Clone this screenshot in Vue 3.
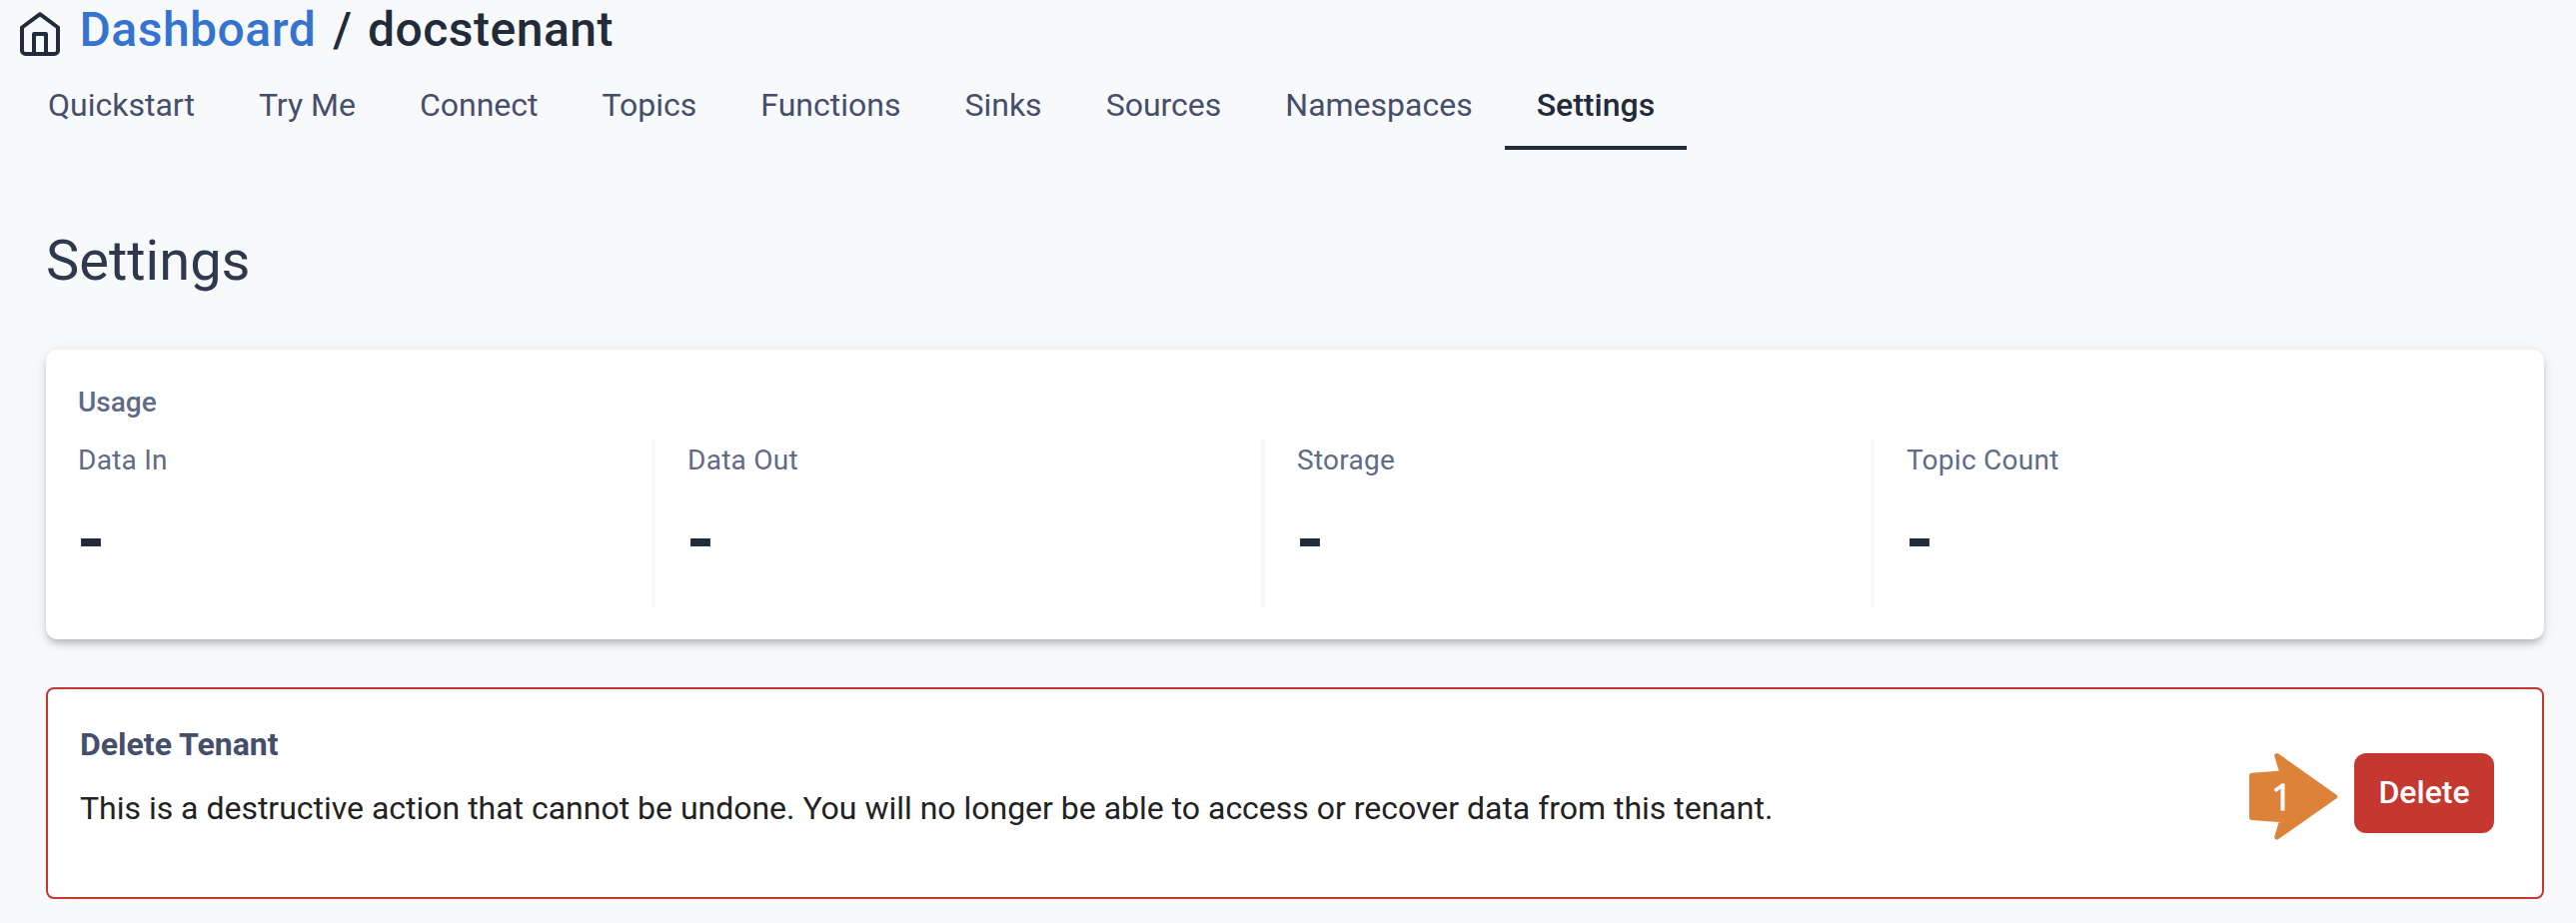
<script setup>
const tabs = ['Quickstart', 'Try Me', 'Connect', 'Topics', 'Functions', 'Sinks', 'Sources', 'Namespaces', 'Settings']
const active = 'Settings'
const metrics = [
  { label: 'Data In', value: '-' },
  { label: 'Data Out', value: '-' },
  { label: 'Storage', value: '-' },
  { label: 'Topic Count', value: '-' },
]
</script>

<template>
  <div class="page">
    <header class="crumbs">
      <svg class="home" viewBox="0 0 40 44" width="40" height="44">
        <path d="M2 15.5 L20 2.2 L38 15.5 V38.400 a3.6 3.6 0 0 1 -3.6 3.6 H5.6 A3.6 3.6 0 0 1 2 38.400 Z" />
        <path d="M14 42 V22 H26 V42" />
      </svg>
      <a class="link">Dashboard</a>
      <span class="slash">/</span>
      <span class="tenant">docstenant</span>
    </header>
    <nav class="tabs">
      <a v-for="t in tabs" :key="t" class="tab" :class="{ active: t === active }">{{ t }}</a>
    </nav>
    <main class="content">
      <h1 class="title">Settings</h1>
      <section class="usage">
        <h2 class="usage-title">Usage</h2>
        <div class="metrics">
          <div v-for="m in metrics" :key="m.label" class="metric">
            <div class="label">{{ m.label }}</div>
            <div class="value">{{ m.value }}</div>
          </div>
        </div>
      </section>
      <section class="danger">
        <div class="danger-text">
          <h2 class="danger-title">Delete Tenant</h2>
          <p class="danger-body">This is a destructive action that cannot be undone. You will no longer be able to access or recover data from this tenant.</p>
        </div>
        <div class="marker">
          <svg viewBox="0 0 90 88" width="90" height="88">
            <path d="M2.500 22.300 L33 20 L27.700 2.600 L85.600 43.500 L27.700 84 L33 66.800 L2.500 64.500 Z" />
          </svg>
          <span class="marker-num">1</span>
        </div>
        <button class="delete">Delete</button>
      </section>
    </main>
  </div>
</template>

<style>
body {
  background: #f8f9fb;
}
</style>

<style scoped>
.page {
  box-sizing: border-box;
  height: 924px;
  overflow: hidden;
  background: #f8f9fb;
  font-family: Roboto, "Liberation Sans", sans-serif;
  color: #222b3a;
}
.crumbs {
  box-sizing: border-box;
  display: flex;
  align-items: flex-start;
  height: 74px;
  padding: 2px 0 0 20px;
  font-size: 48px;
  line-height: 56px;
  font-weight: 500;
  letter-spacing: 0.5px;
}
.home {
  margin: 10px 19.5px 0 0;
  fill: none;
  stroke: #222b3a;
  stroke-width: 4;
  stroke-linejoin: round;
}
.link {
  color: #3573d1;
}
.slash {
  margin: 0 15.5px 0 17px;
}
.tabs {
  display: flex;
  height: 76px;
  padding-left: 16px;
}
.tab {
  box-sizing: border-box;
  padding: 12px 32px 0;
  font-size: 32px;
  line-height: 38px;
  color: #454f6b;
}
.active {
  color: #222b3a;
  font-weight: 500;
  border-bottom: 4px solid #222b3a;
}
.content {
  padding: 78px 32px 0 46px;
}
.title {
  margin: 0;
  font-size: 56px;
  line-height: 66px;
  font-weight: 400;
  color: #2f384c;
}
.usage {
  box-sizing: border-box;
  height: 290px;
  margin-top: 56px;
  padding-top: 36px;
  background: #fff;
  border-radius: 12px;
  box-shadow: 0 6px 6px -2px rgba(0, 0, 0, 0.14), 0 4px 10px rgba(0, 0, 0, 0.11), 0 2px 20px rgba(0, 0, 0, 0.05);
}
.usage-title {
  margin: 0 0 0 32px;
  font-size: 28px;
  line-height: 33px;
  font-weight: 500;
  color: #5f6b87;
}
.metrics {
  display: grid;
  grid-template-columns: repeat(4, 610px);
  margin-top: 21px;
}
.metric {
  box-sizing: border-box;
  height: 168px;
  padding: 4px 0 0 32px;
  border-right: 4px solid #f7f8fa;
}
.metric:last-child {
  border-right: 0;
}
.label {
  font-size: 28px;
  line-height: 34px;
  letter-spacing: 0.26px;
  color: #5f6b87;
}
.value {
  margin: 30px 0 0 -1px;
  font-size: 72px;
  line-height: 66px;
  font-weight: 700;
}
.danger {
  box-sizing: border-box;
  display: flex;
  align-items: flex-start;
  height: 212px;
  margin-top: 48px;
  padding: 0 48px 0 32px;
  background: #fff;
  border: 2px solid #c43830;
  border-radius: 8px;
}
.danger-text {
  flex: 1;
  padding-top: 36px;
}
.danger-title {
  margin: 0;
  font-size: 32px;
  line-height: 38px;
  font-weight: 700;
  color: #454f6b;
}
.danger-body {
  margin: 26px 0 0;
  font-size: 32px;
  line-height: 38px;
  letter-spacing: -0.012px;
  color: #222;
}
.marker {
  display: grid;
  place-items: center;
  width: 90px;
  height: 88px;
  margin: 64px 15px 0 0;
}
.marker > * {
  grid-area: 1 / 1;
}
.marker svg {
  fill: #dc8239;
  stroke: #dc8239;
  stroke-width: 5;
  stroke-linejoin: round;
}
.marker-num {
  padding: 0 25px 3px 0;
  font-family: "Open Sans", sans-serif;
  font-size: 37px;
  line-height: 40px;
  color: #fff;
  -webkit-text-stroke: 0.8px #fff;
}
.delete {
  width: 140px;
  height: 80px;
  margin: 64px 0 0;
  padding: 0 0 2px;
  border: 0;
  border-radius: 12px;
  background: #c43830;
  color: #fff;
  font-family: inherit;
  font-size: 32px;
  font-weight: 500;
}
</style>
